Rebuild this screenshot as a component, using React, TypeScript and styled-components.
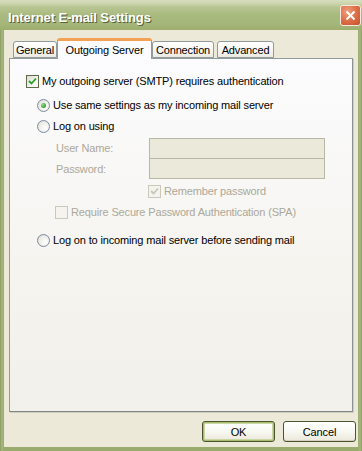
import React from "react";
import styled, { createGlobalStyle } from "styled-components";

const GlobalStyle = createGlobalStyle`
  html, body { margin: 0; padding: 0; background: #ece9d8; }
  body { font-family: "Liberation Sans", Arial, sans-serif; font-size: 11px; letter-spacing: -0.15px; }
`;

const Window = styled.div`
  width: 362px;
  height: 451px;
  display: flex;
  flex-direction: column;
  background: linear-gradient(to right, #8c9d62 0, #a6b780 2px, #9aab6e 4px, #9aab6e 358px, #a6b780 360px, #8c9d62 362px);
  overflow: hidden;
`;

const TitleBar = styled.div`
  height: 30px;
  flex: none;
  display: flex;
  align-items: center;
  padding-left: 8px;
  padding-right: 1px;
  padding-top: 4px;
  box-sizing: border-box;
  background: linear-gradient(to bottom, #d7ddc0 0, #cbd4ab 4px, #b8c692 7px, #aabb80 14px, #a5b679 24px, #9dae6e 30px);
`;

const Title = styled.span`
  font-family: "Liberation Sans", Arial, sans-serif;
  font-weight: bold;
  font-size: 13px;
  letter-spacing: -0.1px;
  color: #ffffff;
  text-shadow: 1px 1px 0 #55613a;
`;

const CloseButton = styled.div`
  margin-left: auto;
  margin-top: -3px;
  width: 19px;
  height: 19px;
  border: 1px solid #f4eadf;
  border-radius: 3px;
  background: radial-gradient(circle at 35% 30%, #f0a07d 0, #dc6a45 55%, #c2522e 100%);
  display: flex;
  align-items: center;
  justify-content: center;
`;

const Frame = styled.div`
  flex: 1;
  margin: 0 4px 4px 4px;
  background: #ece9d8;
  display: flex;
  flex-direction: column;
  padding: 7px 5px 0 5px;
`;

const TabStrip = styled.div`
  display: flex;
  align-items: flex-end;
  height: 21px;
  padding-left: 4px;
  position: relative;
  z-index: 1;
`;

const Tab = styled.div<{ $w: number; $active?: boolean; $ml?: number }>`
  width: ${(p) => p.$w}px;
  margin-left: ${(p) => p.$ml ?? 0}px;
  box-sizing: border-box;
  height: ${(p) => (p.$active ? 21 : 17)}px;
  display: flex;
  align-items: center;
  justify-content: center;
  padding-top: ${(p) => (p.$active ? 0 : 1)}px;
  color: #000;
  font-size: 11px;
  border: 1px solid #919b9c;
  border-bottom: ${(p) => (p.$active ? "none" : "1px solid #919b9c")};
  border-top: ${(p) => (p.$active ? "3px solid #f3a155" : "1px solid #919b9c")};
  border-radius: 3px 3px 0 0;
  background: ${(p) =>
    p.$active ? "#fcfcfe" : "linear-gradient(to bottom, #ffffff, #f4f3ee 70%, #eae8e0)"};
  margin-bottom: ${(p) => (p.$active ? -1 : 0)}px;
`;

const Panel = styled.div`
  height: 354px;
  box-sizing: border-box;
  border: 1px solid #919b9c;
  border-bottom-color: #7f8688;
  border-right-color: #8a9293;
  background: linear-gradient(to bottom, #fcfcfe 0, #f5f4ef 60%, #f1f0ea 100%);
  box-shadow: 1px 1px 0 #d0cdbd;
  display: flex;
  flex-direction: column;
  padding-top: 14px;
`;

const Row = styled.div<{ $indent: number; $mt: number; $disabled?: boolean }>`
  display: flex;
  align-items: center;
  height: 16px;
  padding-left: ${(p) => p.$indent}px;
  margin-top: ${(p) => p.$mt}px;
  gap: 3px;
  color: ${(p) => (p.$disabled ? "#aca899" : "#000")};
  white-space: nowrap;
`;

const Box = styled.span<{ $disabled?: boolean }>`
  width: 13px;
  height: 13px;
  box-sizing: border-box;
  flex: none;
  border: 1px solid ${(p) => (p.$disabled ? "#cac8bb" : "#5f6b4a")};
  background: ${(p) =>
    p.$disabled ? "#f4f3ee" : "linear-gradient(135deg, #dcdcd4 0, #f4f4f0 60%, #ffffff 100%)"};
  display: flex;
  align-items: center;
  justify-content: center;
`;

const Radio = styled.span`
  width: 13px;
  height: 13px;
  box-sizing: border-box;
  flex: none;
  border-radius: 50%;
  border: 1px solid #7f8a9e;
  background: radial-gradient(circle at 65% 65%, #ffffff 0, #f0f0ec 45%, #d8d9d4 100%);
  display: flex;
  align-items: center;
  justify-content: center;
`;

const Dot = styled.span`
  width: 5px;
  height: 5px;
  border-radius: 50%;
  background: radial-gradient(circle at 35% 35%, #8ee08a 0, #3faa3a 60%, #2a8a26 100%);
`;

const Fields = styled.div`
  display: grid;
  grid-template-columns: 93px 176px;
  padding-left: 46px;
  margin-top: 4px;
`;

const FieldLabel = styled.div`
  height: 20px;
  display: flex;
  align-items: center;
  color: #aca899;
`;

const TextBox = styled.div<{ $first?: boolean }>`
  height: 21px;
  box-sizing: border-box;
  margin-top: ${(p) => (p.$first ? 0 : -1)}px;
  border: 1px solid #b9b8a6;
  background: #ebe9d9;
`;

const ButtonRow = styled.div`
  display: flex;
  justify-content: flex-end;
  gap: 8px;
  margin-top: 9px;
  margin-right: -3px;
`;

const Button = styled.div<{ $default?: boolean }>`
  width: 73px;
  height: 21px;
  box-sizing: border-box;
  border: 1px solid #4a5530;
  border-radius: 3px;
  background: linear-gradient(to bottom, #ffffff 0, #f8f8f2 50%, #ebe8da 100%);
  box-shadow: ${(p) =>
    p.$default ? "inset 0 0 0 1px #a9bb6e, inset 0 0 0 2px #cad7a0" : "inset 0 -1px 0 #d6d0c0"};
  display: flex;
  align-items: center;
  justify-content: center;
  color: #000;
`;

const Check = ({ color }: { color: string }) => (
  <svg width="9" height="9" viewBox="0 0 9 9">
    <path d="M1 4 L3.5 6.5 L8 1.5" stroke={color} strokeWidth="1.8" fill="none" />
  </svg>
);

export default function App() {
  return (
    <>
      <GlobalStyle />
      <Window>
        <TitleBar>
          <Title>Internet E-mail Settings</Title>
          <CloseButton>
            <svg width="11" height="11" viewBox="0 0 11 11">
              <path d="M1.5 1.5 L9.5 9.5 M9.5 1.5 L1.5 9.5" stroke="#fff" strokeWidth="2" />
            </svg>
          </CloseButton>
        </TitleBar>
        <Frame>
          <TabStrip>
            <Tab $w={44}>General</Tab>
            <Tab $w={95} $active>Outgoing Server</Tab>
            <Tab $w={62}>Connection</Tab>
            <Tab $w={57} $ml={3}>Advanced</Tab>
          </TabStrip>
          <Panel>
            <Row $indent={16} $mt={0}>
              <Box>
                <Check color="#2aa226" />
              </Box>
              My outgoing server (SMTP) requires authentication
            </Row>
            <Row $indent={27} $mt={8}>
              <Radio>
                <Dot />
              </Radio>
              Use same settings as my incoming mail server
            </Row>
            <Row $indent={27} $mt={5}>
              <Radio />
              Log on using
            </Row>
            <Fields>
              <FieldLabel>User Name:</FieldLabel>
              <TextBox $first />
              <FieldLabel>Password:</FieldLabel>
              <TextBox />
            </Fields>
            <Row $indent={138} $mt={4} $disabled>
              <Box $disabled>
                <Check color="#c8c6b8" />
              </Box>
              Remember password
            </Row>
            <Row $indent={45} $mt={5} $disabled>
              <Box $disabled />
              Require Secure Password Authentication (SPA)
            </Row>
            <Row $indent={27} $mt={12}>
              <Radio />
              Log on to incoming mail server before sending mail
            </Row>
          </Panel>
          <ButtonRow>
            <Button $default>OK</Button>
            <Button>Cancel</Button>
          </ButtonRow>
        </Frame>
      </Window>
    </>
  );
}
